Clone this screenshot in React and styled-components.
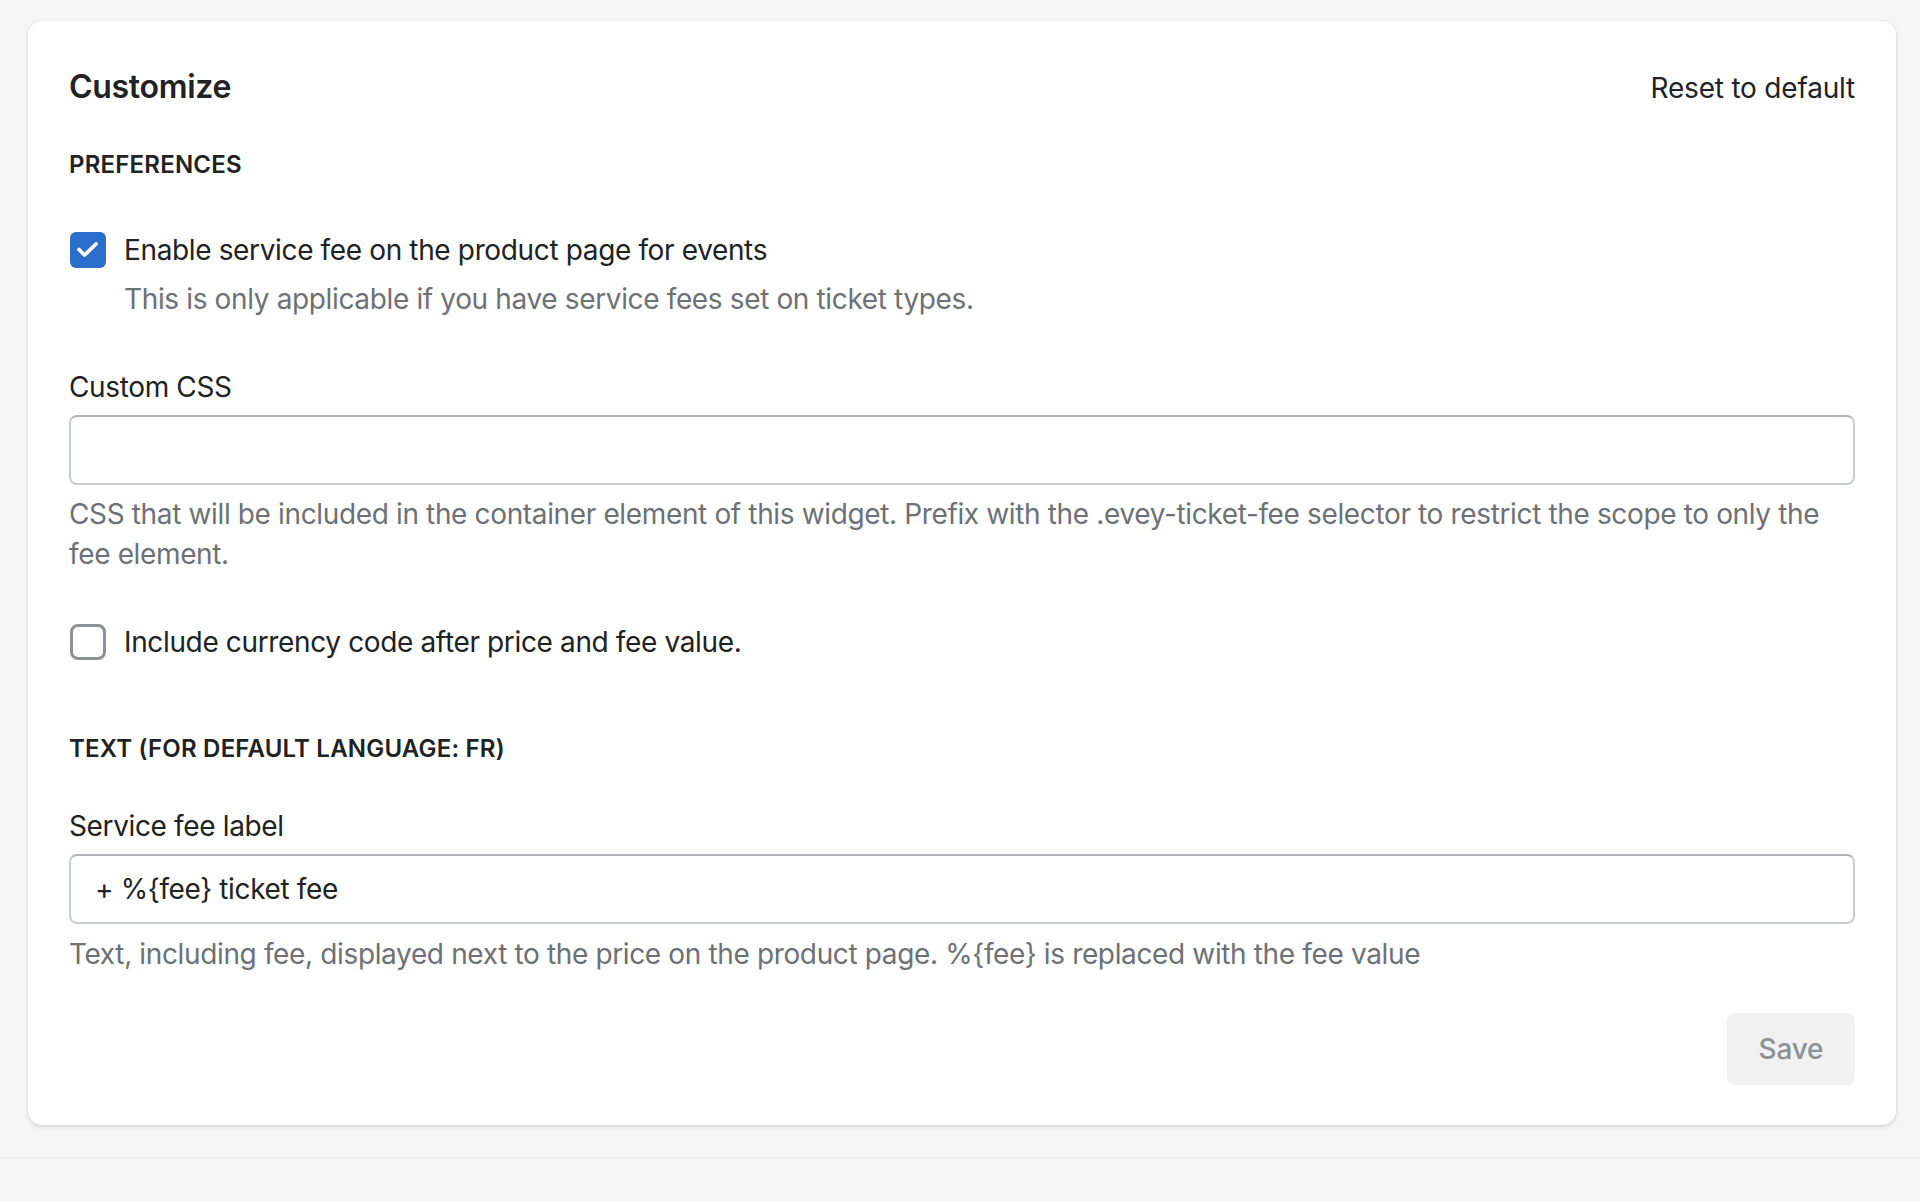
import React from 'react';
import styled, { createGlobalStyle } from 'styled-components';

const GlobalStyle = createGlobalStyle`
  html, body { margin: 0; padding: 0; background: #f6f6f7; }
  body {
    font-family: Inter, "Noto Sans", sans-serif;
    color: #202223;
    -webkit-font-smoothing: antialiased;
  }
  * { box-sizing: border-box; }
`;

const Page = styled.div`
  min-height: 1201px;
  background: #f6f6f7;
`;

const Main = styled.main`
  padding: 21px 24px 0 28px;
`;

const Card = styled.section`
  background: #fff;
  border-radius: 14px;
  box-shadow: 0 0 0 1px rgba(63, 63, 68, 0.05), 0 2px 4px rgba(63, 63, 68, 0.15);
  padding: 42px 41px 40px;
`;

const Header = styled.div`
  display: flex;
  justify-content: space-between;
  align-items: center;
  height: 48px;
`;

const Title = styled.h2`
  margin: 0;
  font-size: 32px;
  line-height: 48px;
  font-weight: 600;
  letter-spacing: -0.3px;
  color: #202223;
`;

const PlainButton = styled.button`
  border: 0;
  background: none;
  padding: 0;
  margin-top: 2px;
  font-family: inherit;
  font-size: 28px;
  line-height: 40px;
  letter-spacing: -0.2px;
  color: #202223;
  cursor: pointer;
`;

const Subheading = styled.h3`
  margin: ${(p) => p.$mt}px 0 0;
  font-size: 24px;
  line-height: 32px;
  font-weight: 600;
  text-transform: uppercase;
  letter-spacing: 0.2px;
  color: #202223;
`;

const CheckRow = styled.label`
  display: flex;
  align-items: center;
  gap: 18px;
  margin-top: ${(p) => p.$mt}px;
  cursor: pointer;
`;

const Box = styled.span`
  width: 36px;
  height: 36px;
  margin-left: 1px;
  flex: none;
  border-radius: ${(p) => (p.$checked ? '6px' : '8px')};
  display: flex;
  align-items: center;
  justify-content: center;
  background: ${(p) => (p.$checked ? '#2c6ecb' : '#fff')};
  border: ${(p) => (p.$checked ? '0' : '3px solid #8c9196')};
`;

const CheckLabel = styled.span`
  font-size: 28px;
  line-height: 40px;
  letter-spacing: -0.36px;
  color: #202223;
`;

const HelpText = styled.p`
  margin: ${(p) => p.$mt}px 0 0 ${(p) => p.$indent || 0}px;
  font-size: 28px;
  line-height: 40px;
  letter-spacing: -0.36px;
  color: #6d7175;
`;

const FieldLabel = styled.div`
  margin-top: ${(p) => p.$mt}px;
  font-size: 28px;
  line-height: 40px;
  letter-spacing: -0.36px;
  color: #202223;
`;

const TextInput = styled.input`
  display: block;
  width: 100%;
  height: 70px;
  margin-top: 8px;
  padding: 0 24px;
  font-family: inherit;
  font-size: 28px;
  letter-spacing: -0.36px;
  color: #202223;
  background: #fff;
  border: 2px solid #c9cccf;
  border-top-color: #aeb4b9;
  border-radius: 8px;
  outline: none;
`;

const Footer = styled.div`
  display: flex;
  justify-content: flex-end;
  margin-top: 39px;
`;

const SaveButton = styled.button`
  width: 128px;
  height: 72px;
  border: 0;
  border-radius: 8px;
  background: #f1f1f1;
  color: #8c9196;
  font-family: inherit;
  font-size: 28px;
  font-weight: 500;
  letter-spacing: -0.2px;
  cursor: default;
`;

const Divider = styled.div`
  margin-top: 32px;
  border-top: 2px solid #ececee;
`;

function Checkbox({ checked }) {
  return (
    <Box $checked={checked}>
      {checked && (
        <svg width="36" height="36" viewBox="0 0 36 36" fill="none">
          <polyline
            points="9,17.5 14.5,23 26,12"
            stroke="#fff"
            strokeWidth="3.8"
            strokeLinecap="round"
            strokeLinejoin="round"
          />
        </svg>
      )}
    </Box>
  );
}

export default function App() {
  return (
    <Page>
      <GlobalStyle />
      <Main>
        <Card>
          <Header>
            <Title>Customize</Title>
            <PlainButton>Reset to default</PlainButton>
          </Header>

          <Subheading $mt={38}>Preferences</Subheading>

          <CheckRow $mt={49}>
            <Checkbox checked />
            <CheckLabel>Enable service fee on the product page for events</CheckLabel>
          </CheckRow>
          <HelpText $mt={9} $indent={55}>
            This is only applicable if you have service fees set on ticket types.
          </HelpText>

          <FieldLabel $mt={48}>Custom CSS</FieldLabel>
          <TextInput type="text" defaultValue="" />
          <HelpText $mt={9}>
            CSS that will be included in the container element of this widget. Prefix with the .evey-ticket-fee selector to restrict the scope to only the fee element.
          </HelpText>

          <CheckRow $mt={48}>
            <Checkbox checked={false} />
            <CheckLabel>Include currency code after price and fee value.</CheckLabel>
          </CheckRow>

          <Subheading $mt={71}>Text (for default language: FR)</Subheading>

          <FieldLabel $mt={41}>Service fee label</FieldLabel>
          <TextInput type="text" defaultValue="+ %{fee} ticket fee" />
          <HelpText $mt={10}>
            Text, including fee, displayed next to the price on the product page. %{'{fee}'} is replaced with the fee value
          </HelpText>

          <Footer>
            <SaveButton disabled>Save</SaveButton>
          </Footer>
        </Card>
      </Main>
      <Divider />
    </Page>
  );
}
